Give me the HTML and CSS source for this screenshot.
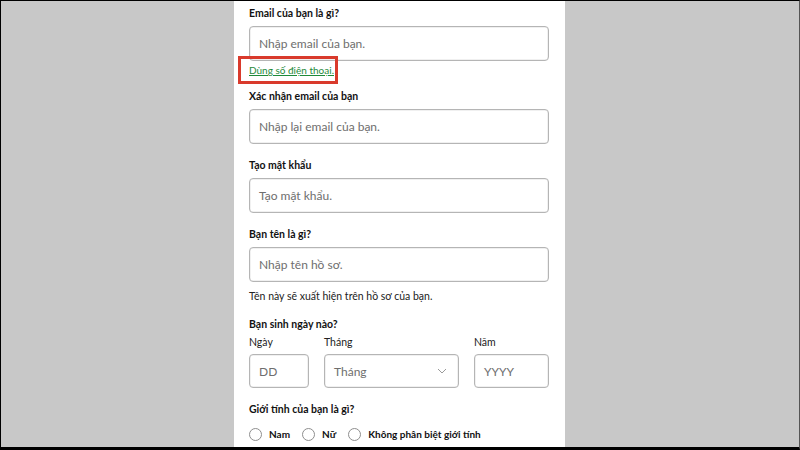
FILE: index.html
```html
<!DOCTYPE html>
<html lang="vi">
<head>
<meta charset="utf-8">
<title>Đăng ký</title>
<link rel="stylesheet" href="styles.css">
</head>
<body>
<div class="frame">
  <main class="sheet">
    <div class="field">
      <div class="label">Email của bạn là gì?</div>
      <div class="input"><span class="ph">Nhập email của bạn.</span></div>
      <div class="link-row">
        <a class="link" href="#">Dùng số điện thoại.</a>
        <span class="highlight"></span>
      </div>
    </div>
    <div class="field">
      <div class="label">Xác nhận email của bạn</div>
      <div class="input"><span class="ph">Nhập lại email của bạn.</span></div>
    </div>
    <div class="field">
      <div class="label">Tạo mật khẩu</div>
      <div class="input"><span class="ph">Tạo mật khẩu.</span></div>
    </div>
    <div class="field">
      <div class="label">Bạn tên là gì?</div>
      <div class="input"><span class="ph">Nhập tên hồ sơ.</span></div>
      <div class="helper">Tên này sẽ xuất hiện trên hồ sơ của bạn.</div>
    </div>
    <div class="field">
      <div class="label">Bạn sinh ngày nào?</div>
      <div class="dob">
        <div class="dob-col day">
          <div class="sublabel">Ngày</div>
          <div class="input small"><span class="ph">DD</span></div>
        </div>
        <div class="dob-col month">
          <div class="sublabel">Tháng</div>
          <div class="input small select"><span class="ph">Tháng</span>
            <svg class="chev" width="10" height="6" viewBox="0 0 10 6"><path d="M1 1 L5 5 L9 1" fill="none" stroke="#9a9a9a" stroke-width="1"/></svg>
          </div>
        </div>
        <div class="dob-col year">
          <div class="sublabel">Năm</div>
          <div class="input small"><span class="ph">YYYY</span></div>
        </div>
      </div>
    </div>
    <div class="field">
      <div class="label">Giới tính của bạn là gì?</div>
      <div class="radios">
        <label class="radio"><span class="dot"></span>Nam</label>
        <label class="radio"><span class="dot"></span>Nữ</label>
        <label class="radio"><span class="dot"></span>Không phân biệt giới tính</label>
      </div>
    </div>
  </main>
</div>
</body>
</html>
```
FILE: styles.css
```css
* { box-sizing: border-box; }
html, body { margin: 0; padding: 0; }
body { width: 800px; height: 450px; overflow: hidden; font-family: Lato, "Liberation Sans", sans-serif; }
.frame {
  width: 800px;
  height: 450px;
  background: #c8c8c8;
  border-top: 1px solid #000;
  border-left: 1px solid #000;
  border-right: 1px solid #555;
  border-bottom: 3px solid #000;
  display: flex;
  justify-content: flex-start;
  overflow: hidden;
}
.sheet {
  margin-left: 233px;
  width: 331px;
  background: #fff;
  padding: 5px 0 0 15px;
  display: flex;
  flex-direction: column;
  gap: 14px;
}
.field { display: flex; flex-direction: column; }
.label {
  font-size: 10.5px;
  font-weight: 700;
  line-height: 14px;
  color: #111;
  margin-bottom: 6px;
}
.input {
  width: 300px;
  height: 35px;
  border: 1px solid #b5b5b5;
  border-radius: 4px;
  display: flex;
  align-items: center;
  padding-left: 9px;
  box-shadow: inset 0 0 0 0.5px #e2e2e2;
}
.ph { font-size: 12px; color: #6e6e6e; }
.link-row { position: relative; height: 14px; line-height: 14px; }
.link {
  font-size: 10px;
  color: #1e8a3a;
  text-decoration: underline;
}
.highlight {
  position: absolute;
  left: -11px;
  top: -5px;
  width: 100px;
  height: 28px;
  border: 3px solid #d93a2c;
}
.helper { font-size: 10.5px; line-height: 14px; color: #222; margin-top: 7px; }
.dob { display: flex; gap: 15px; margin-top: -2px; }
.dob-col { display: flex; flex-direction: column; }
.sublabel { font-size: 10.5px; line-height: 14px; color: #222; margin-bottom: 5px; }
.input.small { height: 34px; }
.day .input { width: 60px; }
.month .input { width: 135px; }
.year .input { width: 75px; }
.select { justify-content: space-between; padding-right: 11px; }
.chev { display: block; }
.radios { display: flex; align-items: center; gap: 12px; margin-top: 4px; height: 16px; }
.radio { display: flex; align-items: center; gap: 7px; font-size: 10px; font-weight: 700; color: #111; }
.dot {
  width: 13px;
  height: 13px;
  border: 1px solid #8e8e8e;
  border-radius: 50%;
  display: inline-block;
}
```
